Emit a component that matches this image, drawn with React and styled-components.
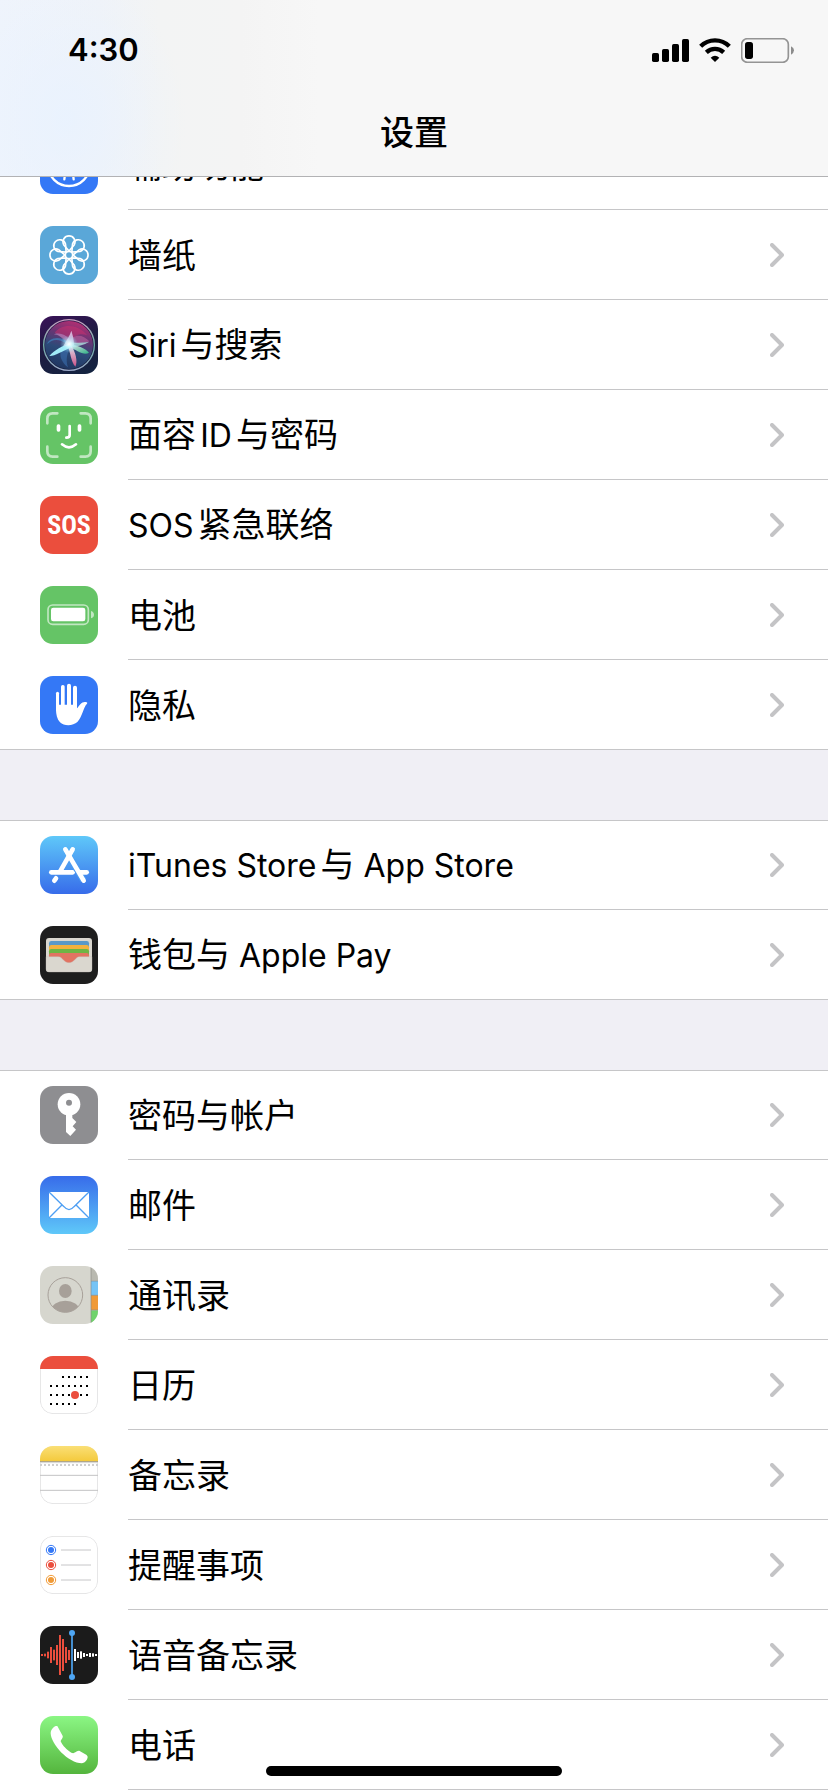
import React from 'react';
import styled, { createGlobalStyle } from 'styled-components';

const GlobalStyle = createGlobalStyle`
    * {
        box-sizing: border-box;
    }

    body {
        margin: 0;
        background-color: #f0eff5;
        color: #000;
        font-family: Inter, "Noto Sans CJK SC", sans-serif;
    }
`;

const Page = styled.div`
    min-height: 100vh;
    display: flex;
    flex-direction: column;
`;

const Header = styled.header`
    position: fixed;
    top: 0;
    left: 0;
    right: 0;
    z-index: 1;
    border-bottom: 1px solid #b2b2b4;
    background:
        radial-gradient(ellipse 120px 150px at 66px 120px, rgba(232, 242, 255, 0.8), rgba(232, 242, 255, 0)),
        linear-gradient(90deg, #eff4fc 0, #f0f3f8 100px, #f3f4f4 160px, #f4f4f4 240px, #f7f7f7 320px);
`;

const StatusBar = styled.div`
    height: 88px;
    padding: 12px 34px 0 68px;
    display: flex;
    align-items: center;
    justify-content: space-between;
`;

const Time = styled.time`
    font-size: 31px;
    line-height: 40px;
    font-weight: 600;
`;

const StatusIcons = styled.div`
    display: flex;
    align-items: center;
    gap: 10px;
`;

const NavBar = styled.div`
    height: 88px;
    padding-top: 2px;
    display: flex;
    align-items: center;
    justify-content: center;
`;

const Title = styled.h1`
    margin: 0;
    font-size: 34px;
    line-height: 48px;
    font-weight: 500;
`;

const Content = styled.main`
    flex: 1;
    padding-top: 120px;
    display: flex;
    flex-direction: column;
    gap: 70px;
`;

const Group = styled.ul`
    list-style: none;
    margin: 0;
    padding: 0;
    background-color: #fff;
    box-shadow: inset 0 1px 0 #c6c6c8${({ $open }) => ($open ? '' : ', inset 0 -1px 0 #c6c6c8')};
    flex-grow: ${({ $open }) => ($open ? 1 : 0)};
`;

const Row = styled.a`
    height: 90px;
    padding-left: 40px;
    display: flex;
    align-items: center;
    gap: 30px;
    color: inherit;
    text-decoration: none;
`;

const RowBody = styled.span`
    flex: 1;
    height: 100%;
    padding-right: 44px;
    display: flex;
    align-items: center;
    justify-content: space-between;
    border-bottom: 1px solid ${({ $last }) => ($last ? 'transparent' : '#c6c6c8')};
`;

const Label = styled.span`
    padding-top: 2px;
    font-size: 34px;
    line-height: 48px;
    text-autospace: normal;
`;

const Latin = styled.span`
    font-size: 32px;
`;

const Tile = styled.svg`
    width: 58px;
    height: 58px;
    flex: none;
    display: block;
    border-radius: 13px;
    background: ${({ $bg }) => $bg};
`;

const SosText = styled.text`
    font-family: "Roboto Condensed", "Liberation Sans Narrow", Roboto, sans-serif;
    font-size: 78px;
    font-weight: 700;
    text-anchor: middle;
`;

const HomeIndicator = styled.div`
    position: fixed;
    bottom: 16px;
    left: 50%;
    width: 296px;
    height: 10px;
    margin-left: -148px;
    border-radius: 5px;
    background-color: #000;
`;

const Icon = ({ bg, children }) => (
    <Tile $bg={bg} viewBox="0 0 174 174" fill="none" aria-hidden="true">{children}</Tile>
);

const Signal = () => (
    <svg width="37" height="23" viewBox="0 0 111 69" aria-hidden="true">
        <rect x="0" y="42" width="21" height="27" rx="5" />
        <rect x="30" y="30" width="21" height="39" rx="5" />
        <rect x="60" y="15" width="21" height="54" rx="5" />
        <rect x="90" y="0" width="21" height="69" rx="5" />
    </svg>
);

const Wifi = () => (
    <svg width="32" height="24" viewBox="0 0 96 72" fill="none" aria-hidden="true">
        <path d="M5 25A61 61 0 0 1 91 25" stroke="#000" strokeWidth="13" />
        <path d="M22 43A38 38 0 0 1 74 43" stroke="#000" strokeWidth="13" />
        <path d="M35 59Q48 48 61 59L48 72Z" fill="#000" />
    </svg>
);

const BatteryLevel = () => (
    <svg width="53" height="25" viewBox="0 0 159 75" fill="none" aria-hidden="true">
        <rect x="2" y="2" width="140" height="71" rx="17" stroke="#949494" strokeWidth="5" />
        <rect x="12" y="12" width="24" height="51" rx="8" fill="#000" />
        <path d="M150 25Q159 29 159 37T150 50Z" fill="#8c8c8c" />
    </svg>
);

const Chevron = () => (
    <svg width="14" height="24" viewBox="0 0 14 24" fill="none" aria-hidden="true">
        <path d="M2 2L12 12L2 22" stroke="#c4c4c6" strokeWidth="4" strokeLinecap="round" strokeLinejoin="round" />
    </svg>
);

const AccessibilityIcon = () => (
    <Icon bg="#3478f6">
        <circle cx="87" cy="87" r="63" stroke="#fff" strokeWidth="7" />
        <circle cx="87" cy="49" r="9" fill="#fff" />
        <path d="M50 66L78 71V91L73 130M124 66L96 71V91L101 130M78 71H96V91H78Z" stroke="#fff" strokeWidth="7" strokeLinecap="round" />
    </Icon>
);

const WallpaperIcon = () => (
    <Icon bg="#5aa7d8">
        <g stroke="#fff" strokeWidth="5">
            {[0, 45, 90, 135, 180, 225, 270, 315].map((angle) => (
                <path
                    key={angle}
                    d="M87 75L71 56A18 18 0 1 1 103 56Z"
                    transform={`rotate(${angle} 87 87)`}
                />
            ))}
            <circle cx="87" cy="87" r="11" fill="#5aa7d8" />
        </g>
    </Icon>
);

const SiriIcon = () => (
    <Icon bg="linear-gradient(160deg, #3a1258 0%, #1f1c42 45%, #122440 100%)">
        <defs>
            <linearGradient id="siriOrb" x1="0.65" y1="0" x2="0.35" y2="1">
                <stop offset="0" stopColor="#b52e72" />
                <stop offset="0.3" stopColor="#6b3574" />
                <stop offset="0.6" stopColor="#2c4a78" />
                <stop offset="1" stopColor="#1f3560" />
            </linearGradient>
            <radialGradient id="siriGlow">
                <stop offset="0" stopColor="#fff" />
                <stop offset="0.3" stopColor="#dffcff" stopOpacity="0.7" />
                <stop offset="1" stopColor="#7ad8f0" stopOpacity="0" />
            </radialGradient>
            <linearGradient id="siriRing" x1="0" y1="0" x2="0" y2="1">
                <stop offset="0" stopColor="#c9a0c0" />
                <stop offset="0.5" stopColor="#6fb0a8" />
                <stop offset="1" stopColor="#9aa8c8" />
            </linearGradient>
            <linearGradient id="siriRay" x1="0" y1="0" x2="1" y2="1">
                <stop offset="0" stopColor="#fff" />
                <stop offset="1" stopColor="#2fc487" />
            </linearGradient>
            <linearGradient id="siriTail" x1="0" y1="0" x2="0" y2="1">
                <stop offset="0" stopColor="#fff" />
                <stop offset="1" stopColor="#e8558f" />
            </linearGradient>
        </defs>
        <circle cx="87" cy="87" r="72" fill="url(#siriOrb)" />
        <path d="M44 50C62 26 108 18 142 58C120 50 104 56 92 80Z" fill="#d8306e" opacity="0.45" />
        <path d="M82 88C70 68 56 54 40 56C54 46 90 56 94 84Z" fill="#b99fd8" opacity="0.5" />
        <path d="M80 84C60 70 40 66 22 84C22 72 50 56 78 74Z" fill="#3d9bd8" opacity="0.5" />
        <path d="M86 80C100 52 128 54 148 76C132 82 108 80 94 90Z" fill="#c0639f" opacity="0.6" />
        <path d="M84 92C58 94 50 126 84 154C76 130 82 112 90 96Z" fill="#437fc5" opacity="0.45" />
        <path d="M88 86C112 86 138 98 147 110C132 120 108 102 88 92Z" fill="url(#siriRay)" opacity="0.85" />
        <path d="M82 88C92 108 92 136 106 152C114 138 108 108 92 86Z" fill="url(#siriTail)" opacity="0.85" />
        <path d="M90 82C68 90 44 102 28 120C42 122 66 106 94 94Z" fill="#a8f4ff" opacity="0.95" />
        <path d="M94 44C90 58 80 72 70 90L102 88C102 70 98 56 94 44Z" fill="#e6defa" opacity="0.75" />
        <path d="M86 79C108 81 130 80 148 77C132 87 112 92 92 93Z" fill="#bff9f0" opacity="0.7" />
        <circle cx="87" cy="84" r="27" fill="url(#siriGlow)" />
        <circle cx="87" cy="87" r="76" stroke="url(#siriRing)" strokeWidth="4" />
    </Icon>
);

const FaceIdIcon = () => (
    <Icon bg="#65c466">
        <g strokeWidth="8" stroke="#fff" strokeLinecap="round">
            <path
                opacity="0.6"
                d="M22 52V38Q22 22 38 22H52M122 22H136Q152 22 152 38V52M152 122V136Q152 152 136 152H122M52 152H38Q22 152 22 136V122"
            />
            <path d="M89 60V87Q89 95 79 95" />
            <path d="M66 115Q87 133 108 115" />
        </g>
        <rect x="50" y="55" width="11" height="22" rx="5" fill="#fff" />
        <rect x="113" y="55" width="11" height="22" rx="5" fill="#fff" />
    </Icon>
);

const SosIcon = () => (
    <Icon bg="#eb4e3d">
        <SosText x="87" y="115" fill="#fff">SOS</SosText>
    </Icon>
);

const BatteryIcon = () => (
    <Icon bg="#65c466">
        <rect x="24" y="57" width="121" height="58" rx="14" stroke="#fff" strokeWidth="5" opacity="0.6" />
        <rect x="33" y="65" width="103" height="41" rx="7" fill="#fff" />
        <path d="M153 75Q162 78 162 86T153 97Z" fill="#fff" opacity="0.6" />
    </Icon>
);

const PrivacyIcon = () => (
    <Icon bg="#3478f6">
        <g fill="#fff">
            <rect x="48" y="47" width="9" height="60" rx="5" />
            <rect x="63" y="27" width="11" height="80" rx="5" />
            <rect x="81" y="23" width="12" height="80" rx="6" />
            <rect x="99" y="29" width="12" height="80" rx="6" />
            <path d="M48 86H111V97C114 96 121 80 131 79C139 76 144 79 141 83C130 93 128 120 112 138C100 150 72 151 60 139C51 130 48 115 48 100Z" />
        </g>
    </Icon>
);

const AppStoreIcon = () => (
    <Icon bg="linear-gradient(#5fc8f9, #376cea)">
        <g strokeWidth="14" stroke="#fff" strokeLinecap="round">
            <path d="M98 40L60 107" />
            <path d="M34 109H98" />
            <path d="M48 127L43 134" />
            <path d="M96 74L131 134" stroke="#4c9bf2" strokeWidth="20" strokeLinecap="butt" />
            <path d="M76 40L131 134" />
            <path d="M120 109H140" />
        </g>
    </Icon>
);

const WalletIcon = () => (
    <Icon bg="#1e1e1e">
        <rect x="18" y="36" width="138" height="102" rx="9" fill="#dad7cf" />
        <rect x="27" y="45" width="120" height="40" rx="7" fill="#5a99c8" />
        <rect x="27" y="57" width="120" height="40" rx="7" fill="#f4b23e" />
        <rect x="27" y="69" width="120" height="40" rx="7" fill="#6eb545" />
        <rect x="27" y="81" width="120" height="40" rx="7" fill="#e27362" />
        <path
            d="M18 92H56C68 92 70 110 87 110S106 92 118 92H156V129Q156 138 147 138H27Q18 138 18 129Z"
            fill="#dad7cf"
            stroke="#c3c0b8"
        />
    </Icon>
);

const KeyIcon = () => (
    <Icon bg="#8e8e91">
        <path
            d="M78 84V138L91 150L108 131L98 121L109 108L97 96V84Z"
            fill="#fff"
        />
        <circle cx="87" cy="55" r="34" fill="#fff" />
        <circle cx="87" cy="50" r="9" fill="#8e8e91" />
    </Icon>
);

const MailIcon = () => (
    <Icon bg="linear-gradient(#376cea, #5fc8f9)">
        <rect x="27" y="48" width="120" height="78" rx="3" fill="#fff" />
        <path d="M27 48L72 92Q87 110 102 92L147 48M27 126L65 88M147 126L109 88" stroke="#4e9ff3" strokeWidth="4" />
    </Icon>
);

const ContactsIcon = () => (
    <Icon bg="#d6d6ce">
        <defs>
            <clipPath id="contactFace">
                <circle cx="76" cy="87" r="52" />
            </clipPath>
        </defs>
        <rect x="153" y="0" width="21" height="44" fill="#b9b9b0" />
        <rect x="153" y="45" width="21" height="43" fill="#76c4f6" />
        <rect x="153" y="88" width="21" height="44" fill="#f09a37" />
        <rect x="153" y="133" width="21" height="41" fill="#6fd36c" />
        <path d="M153 0V174M153 45H174M153 88H174M153 132H174" stroke="#8b8b85" strokeWidth="2" />
        <circle cx="76" cy="87" r="52" stroke="#a7a099" strokeWidth="3" />
        <g fill="#a7a099" clipPath="url(#contactFace)">
            <ellipse cx="76" cy="75" rx="19" ry="21" />
            <ellipse cx="76" cy="133" rx="42" ry="29" />
        </g>
    </Icon>
);

const TileEdge = () => <rect x="1" y="1" width="172" height="172" rx="38" stroke="#e2e2e3" strokeWidth="3" />;

const CALENDAR_WEEKS = [
    { y: 63, from: 2, to: 6 },
    { y: 90, from: 0, to: 6 },
    { y: 117, from: 0, to: 6 },
    { y: 144, from: 0, to: 4 },
];

const CalendarIcon = () => (
    <Icon bg="#fff">
        <TileEdge />
        <rect width="174" height="39" fill="#eb4e3d" />
        {CALENDAR_WEEKS.map(({ y, from, to }) => (
            <path key={y} d={`M${30 + from * 18} ${y}H${36 + to * 18}`} stroke="#000" strokeWidth="6" strokeDasharray="6 12" />
        ))}
        <circle cx="105" cy="117" r="12" fill="#eb4e3d" />
    </Icon>
);

const NotesIcon = () => (
    <Icon bg="#fff">
        <TileEdge />
        <defs>
            <linearGradient id="notesTop" x1="0" y1="0" x2="0" y2="1">
                <stop offset="0" stopColor="#fadf76" />
                <stop offset="1" stopColor="#f4ca3c" />
            </linearGradient>
        </defs>
        <rect width="174" height="46" fill="url(#notesTop)" />
        <path d="M0 47H174" stroke="#a39a7c" strokeWidth="3" />
        <path d="M0 50H174" stroke="#d5d5d5" strokeWidth="3" />
        <path d="M0 57H174" stroke="#cfcfcf" strokeWidth="6" strokeDasharray="6 6" />
        <path d="M0 88H174M0 133H174" stroke="#c3c3c4" strokeWidth="3" />
    </Icon>
);

const REMINDERS = [
    { y: 42, color: '#3478f6' },
    { y: 87, color: '#eb4e3d' },
    { y: 132, color: '#f09a37' },
];

const RemindersIcon = () => (
    <Icon bg="#fff">
        <TileEdge />
        {REMINDERS.map(({ y, color }) => (
            <g key={y}>
                <circle cx="33" cy={y} r="9" fill={color} />
                <circle cx="33" cy={y} r="14" stroke={color} strokeWidth="3" />
                <path d={`M63 ${y}H153`} stroke="#c6c6c8" strokeWidth="3" />
            </g>
        ))}
    </Icon>
);

// half heights of the bars on both sides of the playhead
const RECORDED = [3, 4, 10, 24, 16, 30, 60, 48, 24, 15];
const UPCOMING = [18, 9, 11, 6, 3, 6, 5, 3];

const VoiceMemosIcon = () => (
    <Icon bg="#1b1b1b">
        {RECORDED.map((half, i) => (
            <rect key={i} x={3 + i * 9} y={87 - half} width="6" height={half * 2} fill="#eb4e3d" />
        ))}
        {UPCOMING.map((half, i) => (
            <rect key={i} x={102 + i * 9} y={87 - half} width="6" height={half * 2} fill="#fff" />
        ))}
        <path d="M96 21V153" stroke="#4ea6f4" strokeWidth="5" />
        <circle cx="96" cy="21" r="9" fill="#4ea6f4" />
        <circle cx="96" cy="153" r="9" fill="#4ea6f4" />
    </Icon>
);

const PhoneIcon = () => (
    <Icon bg="linear-gradient(#8bf684, #54b53d)">
        <path
            d="M48 30C40 32 32 42 32 52C33 85 85 142 126 142C136 140 142 132 143 124C143 120 140 117 136 115L119 105C115 103 110 106 106 109C102 112 98 112 94 110C80 102 68 88 63 78C61 74 63 72 66 68C69 64 69 61 67 58L54 34C53 30 51 29 48 30Z"
            fill="#fff"
        />
    </Icon>
);

const GROUPS = [
    [
        { label: '辅助功能', icon: AccessibilityIcon },
        { label: '墙纸', icon: WallpaperIcon },
        { label: <><Latin>Siri</Latin>与搜索</>, icon: SiriIcon },
        { label: <>面容<Latin>ID</Latin>与密码</>, icon: FaceIdIcon },
        { label: <><Latin>SOS</Latin>紧急联络</>, icon: SosIcon },
        { label: '电池', icon: BatteryIcon },
        { label: '隐私', icon: PrivacyIcon },
    ],
    [
        { label: <><Latin>iTunes Store</Latin>与<Latin> App Store</Latin></>, icon: AppStoreIcon },
        { label: <>钱包与<Latin> Apple Pay</Latin></>, icon: WalletIcon },
    ],
    [
        { label: '密码与帐户', icon: KeyIcon },
        { label: '邮件', icon: MailIcon },
        { label: '通讯录', icon: ContactsIcon },
        { label: '日历', icon: CalendarIcon },
        { label: '备忘录', icon: NotesIcon },
        { label: '提醒事项', icon: RemindersIcon },
        { label: '语音备忘录', icon: VoiceMemosIcon },
        { label: '电话', icon: PhoneIcon },
    ],
];

const SettingsRow = ({ item, last }) => {
    const ItemIcon = item.icon;

    return (
        <li>
            <Row href="#">
                <ItemIcon />
                <RowBody $last={last}>
                    <Label>{item.label}</Label>
                    <Chevron />
                </RowBody>
            </Row>
        </li>
    );
};

const App = () => (
    <Page lang="zh-CN">
        <GlobalStyle />
        <Header>
            <StatusBar>
                <Time>4:30</Time>
                <StatusIcons>
                    <Signal />
                    <Wifi />
                    <BatteryLevel />
                </StatusIcons>
            </StatusBar>
            <NavBar>
                <Title>设置</Title>
            </NavBar>
        </Header>
        <Content>
            {GROUPS.map((items, groupIndex) => {
                const open = groupIndex === GROUPS.length - 1;

                return (
                    <Group key={groupIndex} $open={open}>
                        {items.map((item, i) => (
                            <SettingsRow key={i} item={item} last={!open && i === items.length - 1} />
                        ))}
                    </Group>
                );
            })}
        </Content>
        <HomeIndicator />
    </Page>
);

export default App;
